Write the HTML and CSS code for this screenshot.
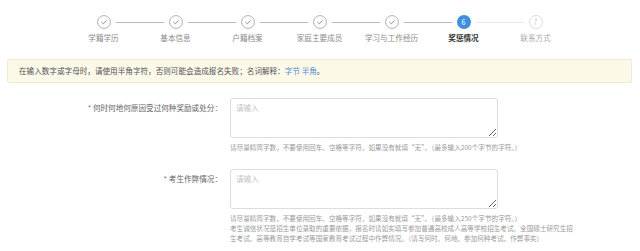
FILE: index.html
```html
<!DOCTYPE html>
<html lang="zh-CN">
<head>
    <meta charset="UTF-8">
    <title>报名 - 奖惩情况</title>
    <link rel="stylesheet" href="styles.css">
</head>
<body>
    <div class="steps">
        <div class="step done first">
            <div class="step-head">
                <span class="bar"></span>
                <svg class="icon" viewBox="0 0 14 14"><circle cx="7" cy="7" r="6.4"/><path d="M4.6 7.3 L6.3 8.8 L9.4 5.4"/></svg>
                <span class="bar"></span>
            </div>
            <div class="step-title">学籍学历</div>
        </div>
        <div class="step done">
            <div class="step-head">
                <span class="bar"></span>
                <svg class="icon" viewBox="0 0 14 14"><circle cx="7" cy="7" r="6.4"/><path d="M4.6 7.3 L6.3 8.8 L9.4 5.4"/></svg>
                <span class="bar"></span>
            </div>
            <div class="step-title">基本信息</div>
        </div>
        <div class="step done">
            <div class="step-head">
                <span class="bar"></span>
                <svg class="icon" viewBox="0 0 14 14"><circle cx="7" cy="7" r="6.4"/><path d="M4.6 7.3 L6.3 8.8 L9.4 5.4"/></svg>
                <span class="bar"></span>
            </div>
            <div class="step-title">户籍档案</div>
        </div>
        <div class="step done">
            <div class="step-head">
                <span class="bar"></span>
                <svg class="icon" viewBox="0 0 14 14"><circle cx="7" cy="7" r="6.4"/><path d="M4.6 7.3 L6.3 8.8 L9.4 5.4"/></svg>
                <span class="bar"></span>
            </div>
            <div class="step-title">家庭主要成员</div>
        </div>
        <div class="step done">
            <div class="step-head">
                <span class="bar"></span>
                <svg class="icon" viewBox="0 0 14 14"><circle cx="7" cy="7" r="6.4"/><path d="M4.6 7.3 L6.3 8.8 L9.4 5.4"/></svg>
                <span class="bar"></span>
            </div>
            <div class="step-title">学习与工作经历</div>
        </div>
        <div class="step active">
            <div class="step-head">
                <span class="bar"></span>
                <span class="num">6</span>
                <span class="bar light"></span>
            </div>
            <div class="step-title">奖惩情况</div>
        </div>
        <div class="step todo last">
            <div class="step-head">
                <span class="bar light"></span>
                <span class="num">7</span>
                <span class="bar"></span>
            </div>
            <div class="step-title">联系方式</div>
        </div>
    </div>

    <div class="notice">
        在输入数字或字母时，请使用半角字符，否则可能会造成报名失败；名词解释：<a href="#">字节</a> <a href="#">半角</a>。
    </div>

    <form class="form">
        <div class="form-row">
            <label class="form-label"><span class="req">*</span> 何时何地何原因受过何种奖励或处分：</label>
            <div class="form-field">
                <textarea placeholder="请输入"></textarea>
                <p class="hint">请尽量精简字数，不要使用回车、空格等字符，如果没有就填“无”。（最多输入200个字节的字符。）</p>
            </div>
        </div>
        <div class="form-row">
            <label class="form-label"><span class="req">*</span> 考生作弊情况：</label>
            <div class="form-field">
                <textarea placeholder="请输入"></textarea>
                <p class="hint">请尽量精简字数，不要使用回车、空格等字符，如果没有就填“无”。（最多输入250个字节的字符。）<br>考生诚信状况是招生单位录取的重要依据，报名时请如实填写参加普通高校成人高等学校招生考试、全国硕士研究生招<br>生考试、高等教育自学考试等国家教育考试过程中作弊情况。（请写何时、何地、参加何种考试、作弊事实）</p>
            </div>
        </div>
    </form>
</body>
</html>
```

FILE: styles.css
```css
* {
    margin: 0;
    padding: 0;
    box-sizing: border-box;
}
body {
    font-family: "Noto Sans CJK SC", "Noto Sans", sans-serif;
    background-color: #fff;
    color: #666;
    font-size: 7.6px;
    width: 640px;
    overflow: hidden;
}
.steps {
    display: flex;
    justify-content: center;
    padding: 15px 0 0 0;
    margin-left: -1px;
}
.step {
    width: 72px;
}
.step-head {
    display: flex;
    align-items: center;
    height: 14px;
}
.bar {
    flex: 1;
    height: 1px;
    background-color: #b9b9b9;
}
.bar.light {
    background-color: #e8e8e8;
}
.first .step-head .bar:first-child,
.last .step-head .bar:last-child {
    visibility: hidden;
}
.icon {
    width: 14px;
    height: 14px;
    margin: 0 5px;
    fill: none;
    stroke-width: 0.9;
}
.icon circle {
    stroke: #a8a8a8;
}
.icon path {
    stroke: #8a8a8a;
    stroke-linecap: round;
    stroke-linejoin: round;
}
.num {
    width: 14px;
    height: 14px;
    margin: 0 5px;
    border-radius: 50%;
    font-size: 7px;
    line-height: 14px;
    text-align: center;
}
.active .num {
    background-color: #3d8fe0;
    color: #fff;
}
.todo .num {
    border: 1px solid #dcdcdc;
    color: #ccc;
    line-height: 12px;
}
.step-title {
    text-align: center;
    margin-top: 4px;
    line-height: 10px;
    color: #8a8a8a;
    white-space: nowrap;
}
.active .step-title {
    color: #333;
    font-weight: bold;
}
.todo .step-title {
    color: #aaa;
}
.notice {
    margin: 16px 8px 0 7px;
    height: 24px;
    line-height: 22px;
    padding: 0 11px;
    background-color: #fdf9e9;
    border: 1px solid #f1ead0;
    border-radius: 2px;
    color: #555;
}
.notice a {
    color: #4a8fd6;
    text-decoration: none;
}
.form {
    padding-top: 15px;
}
.form-row {
    display: flex;
    margin-bottom: 17px;
}
.form-label {
    width: 222px;
    text-align: right;
    padding-top: 5px;
    line-height: 10px;
    color: #666;
    flex-shrink: 0;
}
.req {
    color: #777;
}
.form-field {
    margin-left: 8px;
}
textarea {
    display: block;
    width: 268px;
    height: 40px;
    border: 1px solid #ddd;
    border-radius: 3px;
    padding: 3px 5px;
    font-family: inherit;
    font-size: 7.6px;
    line-height: 11px;
    color: #555;
    outline: none;
}
textarea::placeholder {
    color: #c4c4c4;
}
.hint {
    margin-top: 4px;
    font-size: 6.6px;
    line-height: 10px;
    color: #9a9a9a;
    white-space: nowrap;
}
```
